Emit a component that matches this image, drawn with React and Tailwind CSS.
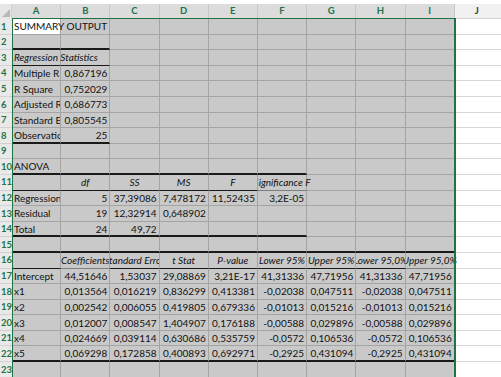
import React from "react";

const COLS = ["A", "B", "C", "D", "E", "F", "G", "H", "I"];

// cell helpers: l = left label, r = right number, c = centred italic header
const L = (t, ov, it) => ({ t, a: "l", ov, it });
const R = (t) => ({ t, a: "r" });
const C = (t, clip = "both") => ({ t, a: "c", clip, it: true });

const DATA = {
  1: [L("SUMMARY OUTPUT", true)],
  3: [L("Regression Statistics", true, true)],
  4: [L("Multiple R"), R("0,867196")],
  5: [L("R Square"), R("0,752029")],
  6: [L("Adjusted R Square"), R("0,686773")],
  7: [L("Standard Error"), R("0,805545")],
  8: [L("Observations"), R("25")],
  10: [L("ANOVA")],
  11: [null, C("df"), C("SS"), C("MS"), C("F"), C("Significance F", "left")],
  12: [L("Regression"), R("5"), R("37,39086"), R("7,478172"), R("11,52435"), R("3,2E-05")],
  13: [L("Residual"), R("19"), R("12,32914"), R("0,648902")],
  14: [L("Total"), R("24"), R("49,72")],
  16: [
    null,
    C("Coefficients", "right"),
    C("Standard Error"),
    C("t Stat"),
    C("P-value"),
    C("Lower 95%"),
    C("Upper 95%"),
    C("Lower 95,0%"),
    C("Upper 95,0%", "left"),
  ],
  17: ["Intercept", "44,51646", "1,53037", "29,08869", "3,21E-17", "41,31336", "47,71956", "41,31336", "47,71956"],
  18: ["x1", "0,013564", "0,016219", "0,836299", "0,413381", "-0,02038", "0,047511", "-0,02038", "0,047511"],
  19: ["x2", "0,002542", "0,006055", "0,419805", "0,679336", "-0,01013", "0,015216", "-0,01013", "0,015216"],
  20: ["x3", "0,012007", "0,008547", "1,404907", "0,176188", "-0,00588", "0,029896", "-0,00588", "0,029896"],
  21: ["x4", "0,024669", "0,039114", "0,630686", "0,535759", "-0,0572", "0,106536", "-0,0572", "0,106536"],
  22: ["x5", "0,069298", "0,172858", "0,400893", "0,692971", "-0,2925", "0,431094", "-0,2925", "0,431094"],
};

// table rules drawn under a row: [row, last column index, "thin" | "thick"]
const RULES = [
  [2, 1, "thick"],
  [3, 1, "thin"],
  [8, 1, "thick"],
  [10, 5, "thick"],
  [11, 5, "thin"],
  [14, 5, "thick"],
  [15, 8, "thick"],
  [16, 8, "thin"],
  [22, 8, "thick"],
];

function ruleFor(row, col) {
  const r = RULES.find(([rr, last]) => rr === row && col <= last);
  return r ? r[2] : null;
}

function cellSpec(row, col) {
  const line = DATA[row];
  if (!line) return null;
  const v = line[col];
  if (v == null) return null;
  if (typeof v === "string") return col === 0 ? L(v) : R(v);
  return v;
}

function Cell({ row, col }) {
  const spec = cellSpec(row, col);
  const active = row === 1 && col === 0;
  const rule = ruleFor(row, col);
  const bottom =
    rule === "thick"
      ? "border-b-2 border-b-[#1a1a1a]"
      : rule === "thin"
      ? "border-b border-b-[#1a1a1a]"
      : "border-b border-b-[#a4a4a4]";
  let layout = "justify-start overflow-hidden pl-[2px]";
  let clip = "";
  let lift = "";
  if (spec) {
    if (spec.a === "r") layout = "justify-end overflow-hidden pr-[2px]";
    if (spec.a === "l" && spec.ov) {
      layout = "justify-start pl-[2px]";
      lift = "z-10";
    }
    if (spec.a === "c") {
      layout = "justify-center";
      if (spec.clip === "both") clip = "overflow-hidden";
      if (spec.clip === "left") {
        clip = "[clip-path:inset(0_-80px_0_0)]";
        lift = "z-10";
      }
      if (spec.clip === "right") {
        clip = "[clip-path:inset(0_0_0_-40px)]";
        lift = "z-10";
      }
    }
  }
  return (
    <div
      className={`relative flex items-center h-[15.6px] border-r border-r-[#a4a4a4] ${bottom} ${
        active ? "bg-white" : "bg-[#c9c9c9]"
      } ${layout} ${clip} ${lift}`}
    >
      {spec && (
        <span
          className={`shrink-0 whitespace-nowrap leading-[12px] text-[#111] ${
            spec.it ? "italic" : ""
          }`}
        >
          {spec.t}
        </span>
      )}
    </div>
  );
}

export default function App() {
  const rows = Array.from({ length: 23 }, (_, i) => i + 1);
  return (
    <div
      className="relative w-[501px] h-[377px] overflow-hidden bg-white text-[10px]"
      style={{ fontFamily: "Lato, 'Open Sans', sans-serif" }}
    >
      <div className="h-[4px] bg-white" />
      <div className="grid grid-cols-[12px_repeat(9,49.2px)_1fr]">
        {/* corner select-all */}
        <div className="h-[15px] bg-[#e6e6e6] border-r border-r-[#cfcfcf] flex items-end justify-end pr-[1px] pb-[2px]">
          <svg width="8" height="8" viewBox="0 0 8 8">
            <polygon points="8,0 8,8 0,8" fill="#b8b8b8" />
          </svg>
        </div>
        {COLS.map((c) => (
          <div
            key={c}
            className="h-[15px] bg-[#dcdcdc] border-r border-r-[#c8c8c8] flex items-center justify-center font-bold text-[9.5px] text-[#217346]"
          >
            {c}
          </div>
        ))}
        <div className="h-[15px] bg-[#f1f1f1] border-b border-b-[#d4d4d4] flex items-center pl-[20px] font-bold text-[9.5px] text-[#3c3c3c]">
          J
        </div>

        {rows.map((r) => (
          <React.Fragment key={r}>
            <div className="h-[15.6px] bg-[#e9e9e9] border-b border-b-[#d2d2d2] flex items-center pl-[1px] font-bold text-[9.5px] leading-none text-[#217346]">
              {r}
            </div>
            {COLS.map((c, ci) => (
              <Cell key={c} row={r} col={ci} />
            ))}
            <div className="h-[15.6px] bg-white border-b border-b-[#d8d8d8]" />
          </React.Fragment>
        ))}
      </div>

      {/* selection outline over A1:I23 */}
      <div className="pointer-events-none absolute left-[12px] top-[18px] w-[444px] h-[400px] border-l border-t border-r-2 border-[#217346] z-20" />
    </div>
  );
}
